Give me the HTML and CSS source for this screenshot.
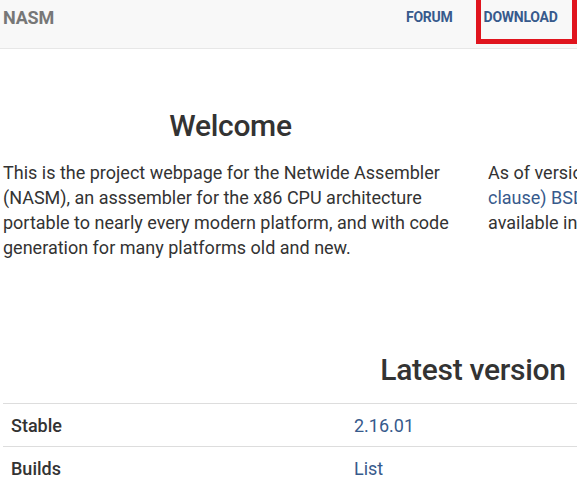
FILE: index.html
```html
<!DOCTYPE html>
<html>
<head>
<meta charset="utf-8">
<link rel="stylesheet" href="styles.css">
</head>
<body>
<header class="navbar">
  <div class="nav-inner">
    <a class="brand">NASM</a>
    <nav class="nav-links">
      <a class="nav-link">FORUM</a>
      <a class="nav-link nav-download">DOWNLOAD<span class="highlight"></span></a>
    </nav>
  </div>
</header>
<main class="container">
  <div class="row">
    <section class="col">
      <h1 class="title">Welcome</h1>
      <p class="text">This is the project webpage for the Netwide Assembler (NASM), an asssembler for the x86 CPU architecture portable to nearly every modern platform, and with code generation for many platforms old and new.</p>
    </section>
    <section class="col col-right">
      <h1 class="title">&nbsp;</h1>
      <p class="text">As of version 2.07, NASM is now under the <a class="link">Simplified (2-<br>clause) BSD license</a>. See the file LICENSE which is<br>available in the source distribution for details.</p>
    </section>
  </div>
  <h1 class="title latest">Latest version</h1>
  <table class="versions">
    <tr><th>Stable</th><td><a class="link">2.16.01</a></td></tr>
    <tr><th>Builds</th><td><a class="link">List</a></td></tr>
  </table>
</main>
</body>
</html>
```
FILE: styles.css
```css
html, body {
  margin: 0;
  padding: 0;
  overflow: hidden;
  background: #fff;
}
body {
  font-family: Roboto, "Liberation Sans", sans-serif;
  color: #333;
  width: 1200px;
}
a { text-decoration: none; }
.navbar {
  height: 48px;
  background: #f8f8f8;
  border-bottom: 1px solid #e7e7e7;
}
.nav-inner {
  width: 940px;
  margin-left: 3px;
  display: flex;
  align-items: flex-start;
}
.brand {
  font-weight: 700;
  font-size: 18px;
  color: #777;
  line-height: 20px;
  padding-top: 8px;
  letter-spacing: -0.2px;
}
.nav-links {
  margin-left: 352px;
  display: flex;
  gap: 31px;
}
.nav-link {
  position: relative;
  font-weight: 700;
  font-size: 14px;
  color: #375a8c;
  line-height: 16px;
  padding-top: 9px;
  letter-spacing: -0.25px;
}
.highlight {
  position: absolute;
  left: -8px;
  top: -8px;
  width: 91px;
  height: 42px;
  border: 5px solid #e0141e;
}
.container {
  width: 940px;
  margin-left: 3px;
}
.row {
  display: flex;
  gap: 30px;
}
.col {
  width: 455px;
  flex: none;
}
.title {
  font-weight: 500;
  font-size: 30px;
  line-height: 36px;
  text-align: center;
  margin: 59px 0 16px;
  letter-spacing: -0.3px;
}
.text {
  font-size: 18px;
  line-height: 25px;
  margin: 0;
}
.link { color: #375a8c; }
.latest {
  margin: 92px 0 15px;
}
.versions {
  width: 100%;
  border-collapse: collapse;
}
.versions th, .versions td {
  border-top: 1px solid #ddd;
  padding: 10px 8px 9px;
  font-size: 18px;
  line-height: 23px;
  text-align: left;
}
.versions th {
  font-weight: 500;
  width: 327px;
}
```
